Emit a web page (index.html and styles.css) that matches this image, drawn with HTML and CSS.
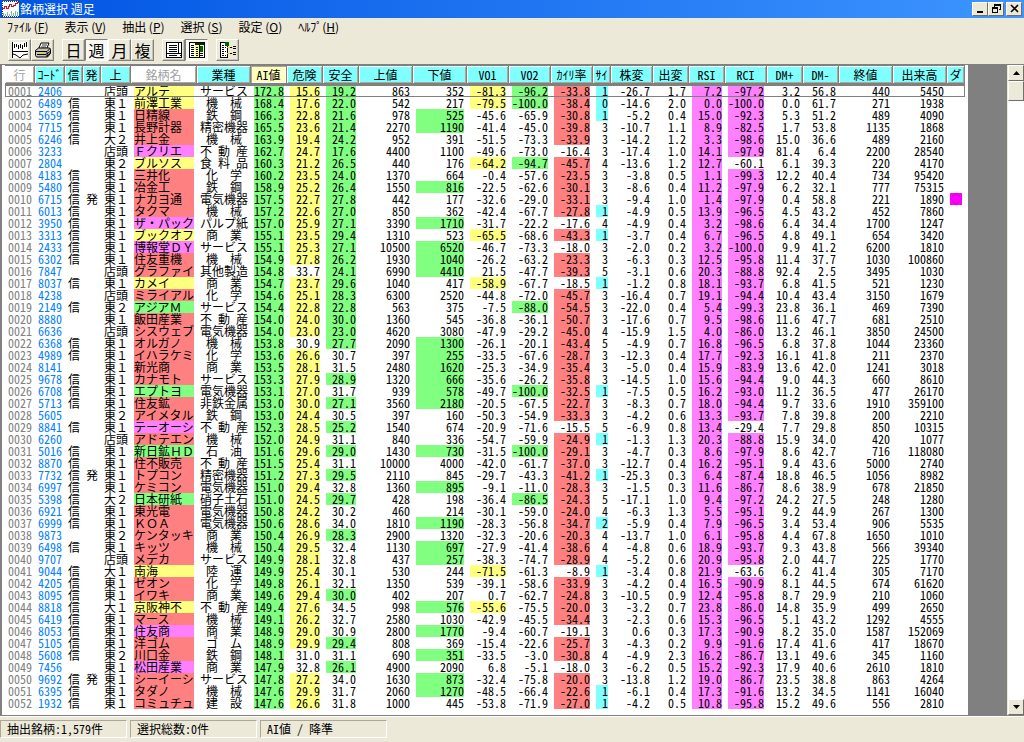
FILE: index.html
```
<!DOCTYPE html>
<html lang="ja">
<head>
  <meta charset="UTF-8"/>
  <meta name="viewport" content="width=device-width, initial-scale=1.0"/>
  <title>銘柄選択 週足</title>
  <link rel="stylesheet" href="styles.css">
</head>
<body>
  <header class="titlebar">
    <svg class="app-icon" width="17" height="16" viewBox="0 0 17 16" shape-rendering="crispEdges">
      <rect width="17" height="16" fill="#fff"/>
      <path d="M0 7.500h2v-2h2v2h2v-2h1v-2h2v2h2v-1h2v-2h2v-1h2" fill="none" stroke="#d01020" stroke-width="1"/>
      <path d="M1.500 15v-3M3.500 15v-2M5.500 15v-4M7.500 15v-2M9.500 15v-5M11.500 15v-3M13.500 15v-5M15.500 15v-4" stroke="#80b8a0"/>
      <path d="M0 .5h17M0 15.500h17M.5 0v16" stroke="#303030" stroke-dasharray="1 1"/>
    </svg>
    <h1>銘柄選択 週足</h1>
    <div class="window-btns">
      <button class="win-btn" aria-label="最小化"><svg width="11" height="10" viewBox="0 0 11 10"><path d="M2 7h6v2H2z"/></svg></button>
      <button class="win-btn" aria-label="元に戻す"><svg width="11" height="10" viewBox="0 0 11 10" shape-rendering="crispEdges"><path d="M3 0h7v6H8V5h1V2H4v1H3zM1 3h6v6H1zM2 5v3h4V5z" fill-rule="evenodd"/></svg></button>
      <button class="win-btn close" aria-label="閉じる"><svg width="11" height="10" viewBox="0 0 11 10"><path d="M2 1l7 7M9 1L2 8" stroke="#000" stroke-width="1.600"/></svg></button>
    </div>
  </header>

  <nav class="menubar">
    <button>ﾌｧｲﾙ (<u>F</u>)</button>
    <button>表示 (<u>V</u>)</button>
    <button>抽出 (<u>P</u>)</button>
    <button>選択 (<u>S</u>)</button>
    <button>設定 (<u>O</u>)</button>
    <button>ﾍﾙﾌﾟ(<u>H</u>)</button>
  </nav>

  <div class="toolbar">
    <div class="tool-group">
      <button class="tool" aria-label="チャート">
        <svg width="18" height="18" viewBox="0 0 18 18" shape-rendering="crispEdges" fill="none" stroke="#000">
          <rect x="1" y="1" width="16" height="16" fill="#fff" stroke="none"/>
          <path d="M1.500 1v16M1 10.500h16M3.500 3v4M5.500 3v3M7.500 4v4M9.500 3v4M11.500 4v4M13.500 2v4M15.500 1v5"/>
          <path d="M2 13l3 1 4 3 3-3 5-1" shape-rendering="auto"/>
        </svg>
      </button>
      <button class="tool" aria-label="印刷">
        <svg width="18" height="18" viewBox="0 0 18 18" stroke="#000">
          <path d="M5 7l2-5h8l-2 5" fill="#fff"/>
          <path d="M8 4h5M7 6h5" stroke-width=".8"/>
          <path d="M1.500 9.500l3-2.500h11l1 1.500v4l-3 3.500H2.500l-1-1.500z" fill="#c8c4b4"/>
          <path d="M2 10.500h11l3-3M13 11v5M3 13.500h9M13 13l3.500-3M13 15l3.500-3" fill="none"/>
          <path d="M6 12h4" stroke="#f0e000"/>
        </svg>
      </button>
    </div>
    <div class="tool-group">
      <button class="tool">日</button>
      <button class="tool on" aria-pressed="true">週</button>
      <button class="tool">月</button>
      <button class="tool">複</button>
    </div>
    <div class="tool-group">
      <button class="tool" aria-label="一覧">
        <svg width="18" height="18" viewBox="0 0 18 18" shape-rendering="crispEdges" stroke="#000">
          <rect x="1.500" y="1.500" width="15" height="15" fill="#fff"/>
          <path d="M4 4.500h8M4 6.500h8M4 8.500h8M4 10.500h8M13.500 2v10M2 12.500h14M4 14.500h8M15 14.500h1" fill="none"/>
        </svg>
      </button>
      <button class="tool on" aria-pressed="true" aria-label="カラー表">
        <svg width="18" height="18" viewBox="0 0 18 18" shape-rendering="crispEdges">
          <rect x="1.500" y="1.500" width="15" height="15" fill="#fff" stroke="#000"/>
          <path d="M7 2h9v2H7z" fill="#003000"/>
          <path d="M7 4h4v12H7z" fill="#ffff60"/><path d="M12 5h3v6h-3z" fill="#006000"/>
          <path d="M3 4.500h3M3 6.500h3M3 8.500h3M3 10.500h3M3 12.500h3M3 14.500h3M8 6.500h2M8 8.500h2M8 10.500h2M8 12.500h2M8 14.500h2M12 12.500h3M12 14.500h3M11.500 4v12" stroke="#000"/>
        </svg>
      </button>
    </div>
    <div class="tool-group">
      <button class="tool" aria-label="分類">
        <svg width="18" height="18" viewBox="0 0 18 18" shape-rendering="crispEdges">
          <path d="M1.500 1.500h7v15h-7z" fill="#fff" stroke="#000"/>
          <path d="M6 1h4v4H6z" fill="#006000"/>
          <path d="M3 4.500h2M3 6.500h2M3 8.500h2M3 10.500h2M3 12.500h2M3 14.500h2M6 6.500h1M6 10.500h1M6 14.500h1" stroke="#000"/>
          <path d="M8 6.500h6M8 12.500h6" stroke="#e8d800"/>
          <path d="M11 6.500h2M11 12.500h2M14 5.500h3M14 7.500h3M14 11.500h3M14 13.500h3" stroke="#000"/>
        </svg>
      </button>
    </div>
  </div>

  <main class="workspace">
    <div class="grid">
      <table>
        <colgroup id="cols"></colgroup>
        <thead><tr id="heads"></tr></thead>
        <tbody id="rows"></tbody>
      </table>
    </div>
    <div class="scrollbar">
      <button aria-label="上へ"><svg width="7" height="4" viewBox="0 0 7 4"><path d="M0 4l3.500-4L7 4z"/></svg></button>
      <div class="thumb"></div>
      <button class="down" aria-label="下へ"><svg width="7" height="4" viewBox="0 0 7 4"><path d="M0 0l3.500 4L7 0z"/></svg></button>
    </div>
  </main>

  <footer class="statusbar">
    <span class="pane">抽出銘柄:1,579件</span>
    <span class="pane">選択総数:0件</span>
    <span class="pane">AI値 / 降準</span>
  </footer>

  <script src="script.js"></script>
</body>
</html>
```

FILE: styles.css
```
* { box-sizing: border-box; }
body { margin: 0; height: 100vh; display: flex; flex-direction: column; overflow: hidden; background: #ece9d8; color: #000; font: 12px/12px "Noto Sans CJK JP", sans-serif; }
button { font: inherit; color: inherit; padding: 0; border: 0; background: none; }
svg { display: block; }

.titlebar { display: flex; align-items: center; height: 18px; padding: 0 2px; gap: 1px; background: linear-gradient(to right, #0054e3, #3d95ff); color: #fff; }
.titlebar h1 { flex: 1; margin: 0; font-size: 12px; font-weight: normal; }
.window-btns { display: flex; }
.win-btn { width: 16px; height: 14px; display: flex; align-items: center; justify-content: center; background: #ece9d8; border: 1px solid; border-color: #fff #716f64 #716f64 #fff; }
.win-btn.close { margin-left: 2px; }

.menubar { display: flex; gap: 16px; height: 18px; padding: 0 7px; }

.toolbar { display: flex; align-items: center; gap: 8px; height: 28px; padding: 0 8px; }
.tool-group { display: flex; }
.tool { width: 23px; height: 22px; display: flex; align-items: center; justify-content: center; font-size: 16px; line-height: 18px; border: 1px solid; border-color: #fff #808080 #808080 #fff; box-shadow: inset -1px -1px #c8c4b4; }
.tool.on { background: #f8f7f0; border-color: #808080 #fff #fff #808080; box-shadow: none; }

/* grid */
.workspace { flex: 1; min-height: 0; display: flex; background: #808080; border: solid #808080; border-width: 1px 0 1px 2px; }
.grid { flex: none; padding: 0 3px; background: #fff; overflow: hidden; font-feature-settings: "hwid"; }
table { width: 960px; table-layout: fixed; border-collapse: separate; border-spacing: 0; }
th { height: 20px; padding: 0; font-weight: normal; white-space: nowrap; background: #80ffff; border: 1px solid #808080; border-width: 1px 1px 2px 0; box-shadow: inset 1px 1px #fff, inset -1px -1px #aca899; }
th.plain { background: #fff; color: #a0a0a0; }
th.sorted { background: #ffffc0; box-shadow: inset 1px 1px #aca899, inset -1px -1px #fff; }
td { height: 12px; padding: 0 3px; line-height: 12px; text-align: right; white-space: pre; background-clip: content-box; }
tbody tr:first-child { outline: 1px solid #808080; outline-offset: -1px; }
.left { text-align: left; }
.mid { text-align: center; }
.wide { font-feature-settings: normal; }
.num { color: #808080; }
.code { color: #0080ff; }
.red { background-color: #ff8080; }
.green { background-color: #80ff80; }
.yellow { background-color: #ffff80; }
.pink { background-color: #ff80ff; }
.cyan { background-color: #80ffff; }
.mark { background-color: #f0f; color: #c000c0; }

.scrollbar { margin-left: auto; width: 17px; display: flex; flex-direction: column; background: #fff; border-left: 1px solid #ece9d8; }
.scrollbar button, .thumb { display: flex; align-items: center; justify-content: center; height: 16px; background: #ece9d8; border: 1px solid; border-color: #fff #716f64 #716f64 #fff; }
.thumb { height: 20px; }
.scrollbar .down { margin-top: auto; }

.statusbar { display: flex; gap: 3px; height: 26px; padding: 3px 0 4px; border-top: 1px solid #fff; font-feature-settings: "hwid"; }
.pane { width: 127px; padding: 2px 6px; white-space: nowrap; border: 1px solid; border-color: #aca899 #fff #fff #aca899; }
```

FILE: script.js
```
const columns = [
  ['行', 30], ['ｺｰﾄﾞ', 30], ['信', 18], ['発', 18], ['上', 30], ['銘柄名', 66], ['業種', 54],
  ['AI値', 36], ['危険', 36], ['安全', 36], ['上値', 54], ['下値', 54], ['VO1', 42], ['VO2', 42],
  ['ｶｲﾘ率', 42], ['ｻｲ', 18], ['株変', 42], ['出変', 36], ['RSI', 36], ['RCI', 42],
  ['DM+', 36], ['DM-', 36], ['終値', 54], ['出来高', 54], ['ダ', 18]
];

// code flags market colour name sector, then the figures; * marks a highlighted lower price
const data = `
2406 - 店頭 y アルテ サービス 172.8 15.6 19.2 863 352 -81.3 -96.2 -33.8 1 -26.7 1.7 7.2 -97.2 3.2 56.8 440 5450
6489 信 東１ y 前澤工業 機　械 168.4 17.6 22.0 542 217 -79.5 -100.0 -38.4 0 -14.6 2.0 0.0 -100.0 0.0 61.7 271 1938
5659 信 東１ r 日精線 鉄　鋼 166.3 22.8 21.6 978 525* -45.6 -65.9 -30.8 1 -5.2 0.4 15.0 -92.3 5.3 51.2 489 4090
7715 信 東１ r 長野計器 精密機器 165.5 23.6 21.4 2270 1190* -41.4 -45.0 -39.8 3 -10.7 1.1 8.9 -82.5 1.7 53.8 1135 1868
6246 信 大２ r 井上金 機　械 163.9 19.4 24.2 952 391 -51.5 -73.3 -33.9 3 -14.2 1.2 3.3 -98.6 15.0 36.6 489 2160
3233 - 店頭 p Ｆクリエ 不_動_産 162.7 24.7 17.6 4400 1100 -49.6 -73.0 -16.4 3 -17.4 1.0 14.1 -97.9 81.4 6.4 2200 28540
2804 - 東２ y ブルソス 食_料_品 160.3 21.2 26.5 440 176 -64.2 -94.7 -45.7 4 -13.6 1.2 12.7 -60.1 6.1 39.3 220 4170
4183 信 東１ r 三井化 化　学 160.2 23.5 24.0 1370 664 -0.4 -57.6 -23.5 3 -3.8 0.5 1.1 -99.3 12.2 40.4 734 95420
5480 信 東１ r 冶金工 鉄　鋼 158.9 25.2 26.4 1550 816* -22.5 -62.6 -30.1 3 -8.6 0.4 11.2 -97.9 6.2 32.1 777 75315
6715 信発 東１ r ナカヨ通 電気機器 157.5 22.7 27.8 442 177 -32.6 -29.0 -33.1 3 -9.4 1.0 1.4 -97.9 0.4 58.8 221 1890 ◇
6013 信 東１ r タクマ 機　械 157.2 22.6 27.0 850 362 -42.4 -67.7 -27.8 1 -4.9 0.5 13.9 -96.5 4.5 43.2 452 7860
3950 信 東１ p ザ・パック パルプ紙 157.0 25.9 27.1 3390 1710* -31.7 -22.2 -17.6 4 -4.9 0.4 3.2 -98.6 6.4 34.4 1700 1247
3313 信 東１ y ブックオフ 商　業 155.1 23.5 29.4 1310 523 -65.5 -68.6 -43.3 1 -3.7 0.4 6.7 -96.5 4.8 49.1 654 3420
2433 信 東１ p 博報堂ＤＹ サービス 155.1 25.3 27.1 10500 6520* -46.7 -73.3 -18.0 3 -2.0 0.2 3.2 -100.0 9.9 41.2 6200 1810
6302 信 東１ r 住友重機 機　械 154.9 27.8 26.2 1930 1040* -26.2 -63.2 -23.3 3 -6.3 0.3 12.5 -95.8 11.4 37.7 1030 100860
7847 - 店頭 r グラファイ 其他製造 154.8 33.7 24.1 6990 4410* 21.5 -47.7 -39.3 5 -3.1 0.6 20.3 -88.8 92.4 2.5 3495 1030
8037 信 東１ y カメイ 商　業 154.7 23.7 29.6 1040 417 -58.9 -67.7 -18.5 1 -1.2 0.8 18.1 -93.7 6.8 41.5 521 1230
4238 - 店頭 r ミライアル 化　学 154.6 25.1 28.3 6300 2520 -44.8 -72.0 -45.7 3 -16.4 0.7 19.1 -94.4 10.4 43.4 3150 1679
2149 信 東２ g アジアＭ サービス 154.4 22.8 22.8 563 375 -7.5 -88.0 -54.5 3 -22.0 0.4 5.4 -99.3 23.8 36.1 469 7390
8880 - 東１ r 飯田産業 不_動_産 154.0 24.0 30.0 1360 545 -36.8 -36.1 -50.7 3 -17.6 0.7 9.5 -98.6 11.6 47.7 681 2510
6636 - 店頭 r シスウェブ 電気機器 154.0 23.0 23.0 4620 3080 -47.9 -29.2 -45.0 4 -15.9 1.5 4.0 -86.0 13.2 46.1 3850 24500
6368 信 東１ r オルガノ 機　械 153.8 30.9 27.7 2090 1300* -26.1 -20.1 -43.4 5 -4.9 0.7 16.8 -96.5 6.8 37.8 1044 23360
4989 信 東１ r イハラケミ 化　学 153.6 26.6 30.7 397 255* -33.5 -67.6 -28.7 3 -12.3 0.4 17.7 -92.3 16.1 41.8 211 2370
8141 - 東１ r 新光商 商　業 153.5 28.1 31.5 2480 1620* -25.3 -34.9 -35.4 3 -5.0 0.4 15.9 -83.9 13.6 42.0 1241 3018
9678 信 東１ r カナモト サービス 153.3 27.9 28.9 1320 666* -35.6 -26.2 -35.8 3 -14.5 1.0 15.6 -94.4 9.0 44.3 660 8610
6708 信 東１ g エプトヨ 電気機器 153.1 27.0 31.7 939 578* -49.7 -100.0 -32.5 1 -7.5 0.5 16.2 -93.0 11.2 36.5 477 26170
5713 信 東１ r 住友鉱 非鉄金属 153.0 30.0 27.1 3560 2180* -20.5 -67.5 -22.7 3 -8.3 0.7 18.0 -94.4 9.7 33.6 1910 359100
5605 - 東２ r アイメタル 鉄　鋼 153.0 24.4 30.5 397 160 -50.3 -54.9 -33.3 3 -4.2 0.6 13.3 -93.7 7.8 39.8 200 2210
8841 信 東１ p テーオーシ 不_動_産 152.3 28.5 25.2 1540 674 -20.9 -71.6 -15.5 5 -6.9 0.8 13.4 -29.4 7.7 29.8 850 10315
6260 - 店頭 r アドテエン 機　械 152.0 24.9 31.1 840 336 -54.7 -59.9 -24.9 1 -1.3 1.3 20.3 -88.8 15.9 34.0 420 1077
5016 信 東１ g 新日鉱ＨＤ 石　油 151.6 29.6 29.0 1430 730* -31.5 -100.0 -29.1 3 -4.7 0.3 8.6 -97.9 8.6 42.7 716 118080
8870 信 東１ r 住不販売 不_動_産 151.5 25.4 31.1 10000 4000 -42.0 -61.7 -37.0 3 -12.7 0.4 16.2 -95.1 9.4 43.6 5000 2740
7732 信発 東１ r トプコン 精密機器 151.2 27.3 29.5 2110 845 -29.7 -43.3 -41.2 1 -25.3 0.3 6.4 -87.4 18.8 46.5 1056 8982
6997 信 東１ r ケミコン 電気機器 151.0 29.4 32.8 1360 895* -9.1 -11.0 -28.3 3 -1.5 0.3 11.6 -86.7 8.6 38.9 678 21850
5398 信 大２ g 日本研紙 硝子土石 151.0 24.5 29.7 428 198 -36.4 -86.5 -24.3 5 -17.1 1.0 9.4 -97.2 24.2 27.5 248 1280
6921 信 東１ r 東光電 電気機器 150.8 24.2 30.2 460 214 -30.1 -59.0 -24.0 4 -6.3 1.3 5.5 -95.1 9.2 44.9 267 1300
6999 信 東１ r ＫＯＡ 電気機器 150.6 28.6 34.0 1810 1190* -28.3 -56.8 -34.7 2 -5.9 0.4 7.9 -96.5 3.4 53.4 906 5535
9873 - 東２ r ケンタッキ 商　業 150.4 26.9 28.3 2900 1320 -32.3 -20.6 -20.3 4 -13.7 1.0 6.1 -95.8 4.4 67.8 1650 1010
6498 信 東１ r キッツ 機　械 150.4 29.5 32.4 1130 697* -27.9 -41.4 -38.6 4 -4.8 0.6 18.9 -93.7 9.3 43.8 566 39340
9707 - 店頭 r メデカ サービス 149.9 28.1 32.8 437 257* -38.3 -74.7 -28.9 4 -5.2 0.6 20.9 -95.8 2.0 44.7 225 1770
9044 信 大１ y 南海 陸　運 149.9 25.4 30.1 530 244 -71.5 -61.3 -8.9 1 -3.4 0.8 21.9 -63.6 6.2 41.4 305 7170
4205 信 東１ r ゼオン 化　学 149.8 26.1 32.1 1350 539 -39.1 -58.6 -33.9 3 -4.2 0.4 16.5 -90.9 8.1 44.5 674 61620
8095 信 東１ r イワキ 商　業 149.6 29.4 30.0 402 207 0.7 -62.7 -24.8 3 -10.5 0.9 12.4 -95.8 8.7 29.9 210 1060
8818 信 大１ y 京阪神不 不_動_産 149.4 27.6 34.5 998 576* -55.6 -75.5 -20.0 3 -3.2 0.7 23.8 -86.0 14.8 35.9 499 2650
6419 信 東１ r マース 機　械 149.1 26.2 32.7 2580 1030 -42.9 -45.5 -34.4 3 -2.3 0.6 15.3 -96.5 5.1 43.2 1292 4555
8053 信 東１ p 住友商 商　業 148.9 29.0 30.9 2800 1770* -9.4 -60.7 -19.1 3 0.6 0.3 17.3 -90.9 8.2 35.0 1587 152069
5105 信 東１ r 洋ゴム ゴ　ム 148.9 29.9 29.4 808 369 -15.4 -22.6 -25.7 3 -4.3 0.2 9.9 -91.6 17.4 41.6 417 18670
5608 信 東２ r 川口金 鉄　鋼 148.1 31.0 31.1 690 351* -33.5 -3.0 -30.8 4 -4.9 2.3 16.2 -86.7 13.1 49.6 345 1160
7456 - 東１ p 松田産業 商　業 147.9 32.8 26.1 4900 2090 6.8 -5.1 -18.0 3 -6.2 0.5 15.2 -92.3 17.9 40.6 2610 1810
9692 信発 東１ r シーイーシ サービス 147.8 27.2 34.0 1630 873* -32.4 -75.8 -20.0 3 -13.8 1.2 19.0 -86.7 23.5 38.8 863 4264
6395 信 東１ r タダノ 機　械 147.6 29.9 31.7 2060 1270* -48.5 -66.4 -22.6 1 -6.1 0.4 17.3 -91.6 13.2 34.5 1141 16040
1932 信 東１ r コミュチュ 建　設 147.6 26.6 31.8 1000 445 -53.8 -71.9 -27.0 1 -4.2 0.5 10.8 -95.8 15.2 49.6 556 2810
`.trim().split('\n');

const nameColors = { y: 'yellow', r: 'red', g: 'green', p: 'pink' };

// figures start at AI値; each rule gives the fill for its column
const fills = [
  () => 'green',
  v => v <= 30 ? 'yellow' : '',
  v => v <= 30 ? 'green' : '',
  () => '',
  (v, hit) => hit ? 'green' : '',
  v => v <= -55 ? 'yellow' : '',
  v => v <= -80 ? 'green' : '',
  v => v <= -20 ? 'red' : '',
  v => v <= 2 ? 'cyan' : '',
  () => '',
  () => '',
  () => 'pink',
  v => v <= -80 ? 'pink' : ''
];

function cell(text, cls) {
  return `<td class="${cls}">${text}</td>`;
}

document.getElementById('cols').innerHTML = columns.map(c => `<col style="width:${c[1]}px">`).join('');
document.getElementById('heads').innerHTML = columns.map(([label]) => {
  const cls = label === 'AI値' ? 'sorted' : (label === '行' || label === '銘柄名') ? 'plain' : '';
  return `<th scope="col" class="${cls}">${label}</th>`;
}).join('');

document.getElementById('rows').innerHTML = data.map((line, i) => {
  const [code, flags, market, color, name, sector, ...rest] = line.split(' ');
  const figures = rest.slice(0, 17);
  const mark = rest[17] || '';
  return '<tr>' +
    cell(String(i + 1).padStart(4, '0'), 'left num') +
    cell(code, 'left code') +
    cell(flags.includes('信') ? '信' : '', 'left') +
    cell(flags.includes('発') ? '発' : '', 'left') +
    cell(market, 'left wide') +
    cell(name, 'left wide ' + nameColors[color]) +
    cell(sector.replace(/_/g, '&ensp;'), 'mid wide') +
    figures.map((f, n) => {
      const text = f.replace('*', '');
      return cell(text, fills[n] ? fills[n](Number(text), f !== text) : '');
    }).join('') +
    cell(mark, mark ? 'left wide mark' : 'left') +
    '</tr>';
}).join('');
```
